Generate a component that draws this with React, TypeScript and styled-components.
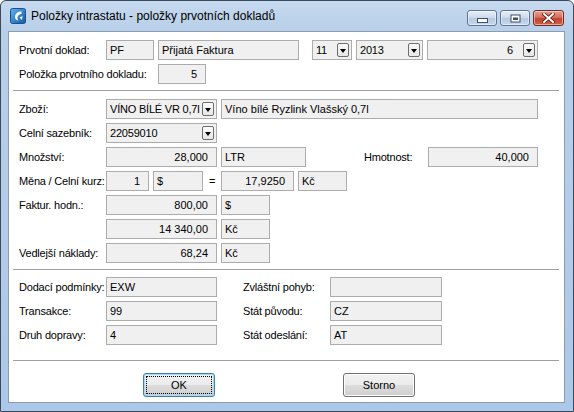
import styled, { createGlobalStyle } from 'styled-components';

const GlobalStyle = createGlobalStyle`
  html, body {
    margin: 0;
    padding: 0;
    background: #ffffff;
  }
  body {
    font-family: 'Liberation Sans', Arial, sans-serif;
    overflow: hidden;
  }
`;

const Window = styled.div({
  width: '574px',
  height: '412px',
  boxSizing: 'border-box',
  border: '1px solid #3a4a5c',
  borderRadius: '6px 6px 0 0',
  background: 'linear-gradient(180deg, #c6daef 0px, #b8cfe9 30px, #acc8e8 100%)',
  display: 'flex',
  flexDirection: 'column',
});

const TitleBar = styled.div({
  height: '30px',
  display: 'flex',
  alignItems: 'center',
  padding: '0 9px 0 9px',
  flexShrink: 0,
});

const Caption = styled.div({
  marginLeft: '5px',
  fontSize: '12px',
  color: '#000',
  flex: 1,
  whiteSpace: 'nowrap',
});

const CaptionButtons = styled.div({
  display: 'flex',
  gap: '3px',
  alignSelf: 'flex-start',
  marginTop: '9px',
});

const CaptionButton = styled.div<{ $close?: boolean }>`
  width: ${(p) => (p.$close ? '31px' : '30px')};
  height: 16px;
  box-sizing: border-box;
  flex-shrink: 0;
  border: 1px solid ${(p) => (p.$close ? '#7a2a20' : '#5f7593')};
  border-radius: 3px;
  display: flex;
  align-items: center;
  justify-content: center;
  background: ${(p) =>
    p.$close
      ? 'linear-gradient(180deg, #e8a091 0%, #d5705e 45%, #c0442f 55%, #d0634a 100%)'
      : 'linear-gradient(180deg, #e7eff8 0%, #cfdcec 45%, #b4c8e0 55%, #c8d9ec 100%)'};
  box-shadow: inset 0 0 0 1px rgba(255, 255, 255, 0.45);
`;

const Client = styled.div({
  margin: '0 8px 8px 7px',
  flex: 1,
  background: '#ffffff',
  border: '1px solid #8c9cb0',
  padding: '0 5px 0 4px',
  display: 'flex',
  flexDirection: 'column',
  fontSize: '11px',
  color: '#000',
});

const Section = styled.div<{ $top: number; $bottom: number }>`
  display: flex;
  flex-direction: column;
  gap: 4px;
  padding: ${(p) => p.$top}px 0 ${(p) => p.$bottom}px 6px;
`;

const Separator = styled.div({
  height: '0',
  borderTop: '1px solid #a0a0a0',
});

const Row = styled.div({
  display: 'flex',
  alignItems: 'center',
  height: '20px',
  gap: '4px',
});

const Label = styled.div<{ $w: number; $ml?: number; $center?: boolean }>`
  width: ${(p) => p.$w}px;
  margin-left: ${(p) => p.$ml ?? 0}px;
  flex-shrink: 0;
  white-space: nowrap;
  letter-spacing: -0.2px;
  text-align: ${(p) => (p.$center ? 'center' : 'left')};
`;

const Field = styled.div<{ $w: number; $right?: boolean; $ml?: number }>`
  width: ${(p) => p.$w}px;
  margin-left: ${(p) => p.$ml ?? 0}px;
  height: 20px;
  box-sizing: border-box;
  flex-shrink: 0;
  border: 1px solid #acacac;
  background: #f0f0f0;
  line-height: 18px;
  padding: ${(p) => (p.$right ? '0 8px 0 3px' : '0 3px')};
  text-align: ${(p) => (p.$right ? 'right' : 'left')};
  white-space: nowrap;
  overflow: hidden;
`;

const ComboBox = styled.div<{ $w: number; $ml?: number }>`
  width: ${(p) => p.$w}px;
  margin-left: ${(p) => p.$ml ?? 0}px;
  height: 20px;
  box-sizing: border-box;
  flex-shrink: 0;
  border: 1px solid #acacac;
  background: #f0f0f0;
  display: flex;
  align-items: center;
  padding: 0 2px 0 3px;
  gap: 2px;
`;

const ComboText = styled.div<{ $right?: boolean }>`
  flex: 1;
  min-width: 0;
  overflow: hidden;
  white-space: nowrap;
  line-height: 18px;
  letter-spacing: -0.2px;
  text-align: ${(p) => (p.$right ? 'right' : 'left')};
  padding-right: ${(p) => (p.$right ? '8px' : '0')};
`;

const DropButton = styled.div({
  width: '12px',
  height: '14px',
  boxSizing: 'border-box',
  border: '1px solid #6d6d6d',
  borderRadius: '2px',
  background: 'linear-gradient(180deg, #fbfbfb 0%, #e6e6e6 100%)',
  display: 'flex',
  alignItems: 'center',
  justifyContent: 'center',
  flexShrink: 0,
  '&::after': {
    content: '""',
    width: 0,
    height: 0,
    borderLeft: '3.5px solid transparent',
    borderRight: '3.5px solid transparent',
    borderTop: '4px solid #000',
    marginTop: '1px',
  },
});

const ButtonBar = styled.div({
  display: 'flex',
  gap: '128px',
  padding: '12px 0 0 130px',
});

const DialogButton = styled.div<{ $focused?: boolean }>`
  width: 72px;
  height: 24px;
  box-sizing: border-box;
  border: 1px solid ${(p) => (p.$focused ? '#3c7fb1' : '#707070')};
  border-radius: 3px;
  background: linear-gradient(180deg, #f2f2f2 0%, #ebebeb 50%, #dddddd 51%, #cfcfcf 100%);
  box-shadow: ${(p) => (p.$focused ? 'inset 0 0 0 1px #a7d9f5' : 'inset 0 0 0 1px #fcfcfc')};
  display: flex;
  align-items: center;
  justify-content: center;
  font-size: 11px;
  position: relative;
  &::after {
    content: '';
    display: ${(p) => (p.$focused ? 'block' : 'none')};
    position: absolute;
    inset: 2px;
    border: 1px dotted #000;
  }
`;

const Combo = ({ w, text, ml, right }: { w: number; text: string; ml?: number; right?: boolean }) => (
  <ComboBox $w={w} $ml={ml}>
    <ComboText $right={right}>{text}</ComboText>
    <DropButton />
  </ComboBox>
);

const AppIcon = () => (
  <svg width="16" height="16" viewBox="0 0 16 16">
    <defs>
      <linearGradient id="ig" x1="0" y1="0" x2="1" y2="1">
        <stop offset="0" stopColor="#5db3f0" />
        <stop offset="1" stopColor="#1459a8" />
      </linearGradient>
    </defs>
    <rect x="0.5" y="0.5" width="15" height="15" rx="2" fill="url(#ig)" stroke="#1a4f8c" />
    <path d="M11.5 3.5 C8 3.5 5 5.5 5 9 C5 11 6.5 12.5 8.5 12.5 C7.5 11.5 7.2 10.2 7.6 8.8 C8.2 6.8 10 6 11.5 6 Z" fill="#fff" />
    <path d="M9.5 9.5 L12.5 8 L12 12 Z" fill="#fff" />
  </svg>
);

const MinGlyph = () => (
  <svg width="11" height="6" viewBox="0 0 11 6" style={{ marginTop: '5px' }}>
    <rect x="0.5" y="0.5" width="10" height="4" fill="#fff" stroke="#3e4f66" />
  </svg>
);

const MaxGlyph = () => (
  <svg width="11" height="9" viewBox="0 0 11 9">
    <rect x="0.5" y="0.5" width="10" height="8" fill="#3e4f66" />
    <rect x="1.5" y="1.5" width="8" height="6" fill="#fff" />
    <rect x="3" y="3.5" width="5" height="2.5" fill="#3e4f66" />
  </svg>
);

const CloseGlyph = () => (
  <svg width="13" height="10" viewBox="0 0 13 10">
    <path d="M2 1 L11 9 M11 1 L2 9" stroke="#5b1a12" strokeWidth="3.6" strokeLinecap="square" />
    <path d="M2 1 L11 9 M11 1 L2 9" stroke="#ffffff" strokeWidth="2" strokeLinecap="square" />
  </svg>
);

export default function App() {
  return (
    <>
      <GlobalStyle />
      <Window>
        <TitleBar>
          <AppIcon />
          <Caption>Položky intrastatu - položky prvotních dokladů</Caption>
          <CaptionButtons>
            <CaptionButton>
              <MinGlyph />
            </CaptionButton>
            <CaptionButton>
              <MaxGlyph />
            </CaptionButton>
            <CaptionButton $close>
              <CloseGlyph />
            </CaptionButton>
          </CaptionButtons>
        </TitleBar>

        <Client>
          <Section $top={8} $bottom={6}>
            <Row>
              <Label $w={83}>Prvotní doklad:</Label>
              <Field $w={48}>PF</Field>
              <Field $w={141}>Přijatá Faktura</Field>
              <Combo w={40} ml={9} text="11" />
              <Combo w={67} text="2013" />
              <Combo w={111} text="6" right />
            </Row>
            <Row>
              <Label $w={135}>Položka prvotního dokladu:</Label>
              <Field $w={48} $right>5</Field>
            </Row>
          </Section>

          <Separator />

          <Section $top={8} $bottom={6}>
            <Row>
              <Label $w={83}>Zboží:</Label>
              <Combo w={111} text="VÍNO BÍLÉ VR 0,7l" />
              <Field $w={317}>Víno bílé Ryzlink Vlašský 0,7l</Field>
            </Row>
            <Row>
              <Label $w={83}>Celní sazebník:</Label>
              <Combo w={111} text="22059010" />
            </Row>
            <Row>
              <Label $w={83}>Množství:</Label>
              <Field $w={111} $right>28,000</Field>
              <Field $w={85}>LTR</Field>
              <Label $w={60} $ml={54}>Hmotnost:</Label>
              <Field $w={110} $right>40,000</Field>
            </Row>
            <Row>
              <Label $w={83}>Měna / Celní kurz:</Label>
              <Field $w={43} $right>1</Field>
              <Field $w={50}>$</Field>
              <Label $w={10} $center>=</Label>
              <Field $w={73} $right>17,9250</Field>
              <Field $w={49}>Kč</Field>
            </Row>
            <Row>
              <Label $w={83}>Faktur. hodn.:</Label>
              <Field $w={111} $right>800,00</Field>
              <Field $w={49}>$</Field>
            </Row>
            <Row>
              <Label $w={83}></Label>
              <Field $w={111} $right>14 340,00</Field>
              <Field $w={49}>Kč</Field>
            </Row>
            <Row>
              <Label $w={83}>Vedlejší náklady:</Label>
              <Field $w={111} $right>68,24</Field>
              <Field $w={49}>Kč</Field>
            </Row>
          </Section>

          <Separator />

          <Section $top={7} $bottom={15}>
            <Row>
              <Label $w={83}>Dodací podmínky:</Label>
              <Field $w={111}>EXW</Field>
              <Label $w={83} $ml={22}>Zvláštní pohyb:</Label>
              <Field $w={112}></Field>
            </Row>
            <Row>
              <Label $w={83}>Transakce:</Label>
              <Field $w={111}>99</Field>
              <Label $w={83} $ml={22}>Stát původu:</Label>
              <Field $w={112}>CZ</Field>
            </Row>
            <Row>
              <Label $w={83}>Druh dopravy:</Label>
              <Field $w={111}>4</Field>
              <Label $w={83} $ml={22}>Stát odeslání:</Label>
              <Field $w={112}>AT</Field>
            </Row>
          </Section>

          <Separator />

          <ButtonBar>
            <DialogButton $focused>OK</DialogButton>
            <DialogButton>Storno</DialogButton>
          </ButtonBar>
        </Client>
      </Window>
    </>
  );
}
